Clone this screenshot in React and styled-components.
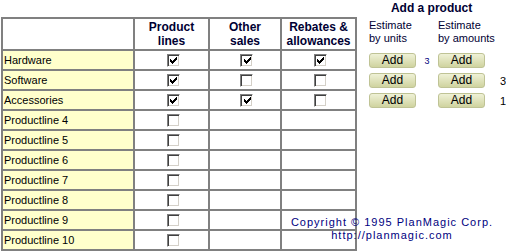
import React from 'react'
import styled, { createGlobalStyle } from 'styled-components'

const GlobalStyle = createGlobalStyle`
    html, body {
        margin: 0;
        padding: 0;
        background: #fff;
    }
    body {
        font-family: "Liberation Sans", Arial, sans-serif;
        color: #000;
    }
`;

const rows = [
    { name: 'Hardware', marks: [true, true, true] },
    { name: 'Software', marks: [true, false, false] },
    { name: 'Accessories', marks: [true, true, false] },
    { name: 'Productline 4', marks: [false, null, null] },
    { name: 'Productline 5', marks: [false, null, null] },
    { name: 'Productline 6', marks: [false, null, null] },
    { name: 'Productline 7', marks: [false, null, null] },
    { name: 'Productline 8', marks: [false, null, null] },
    { name: 'Productline 9', marks: [false, null, null] },
    { name: 'Productline 10', marks: [false, null, null] },
];

const estimates = [
    { units: '3', amounts: '' },
    { units: '', amounts: '3' },
    { units: '', amounts: '1' },
];

const Check = ({ checked }) => (
    <Box>
        {checked && (
            <svg width="7" height="7" viewBox="0 0 7 7" shapeRendering="crispEdges">
                <path d="M6 0h1v3h-1v1h-1v1h-1v1h-1v1h-1v-1h-1v-1h-1v-3h1v1h1v1h1v-1h1v-1h1z" fill="#000" />
            </svg>
        )}
    </Box>
);

const App = () => {
    return (
        <Page>
            <GlobalStyle />
            <Grid>
                <thead>
                    <tr>
                        <Head $w={132} />
                        <Head $w={75}>Product<br />lines</Head>
                        <Head $w={72}>Other<br />sales</Head>
                        <Head $w={75}>Rebates &amp;<br />allowances</Head>
                    </tr>
                </thead>
                <tbody>
                    {rows.map((row) => (
                        <tr key={row.name}>
                            <Label>{row.name}</Label>
                            {row.marks.map((m, i) => (
                                <Cell key={i}>{m !== null && <Check checked={m} />}</Cell>
                            ))}
                        </tr>
                    ))}
                </tbody>
            </Grid>
            <Side>
                <Title>Add a product</Title>
                <Estimates>
                    <Caption>Estimate<br />by units</Caption>
                    <Caption>Estimate<br />by amounts</Caption>
                    {estimates.map((e, i) => (
                        <React.Fragment key={i}>
                            <AddButton>Add</AddButton>
                            <Count $small>{e.units}</Count>
                            <AddButton>Add</AddButton>
                            <Count $pad>{e.amounts}</Count>
                        </React.Fragment>
                    ))}
                </Estimates>
            </Side>
            <Copyright>
                Copyright © 1995 PlanMagic Corp.<br />
                http://planmagic.com
            </Copyright>
        </Page>
    )
}

const Page = styled.div`
    position: relative;
    display: flex;
    align-items: flex-start;
    width: 506px;
    height: 252px;
    overflow: hidden;
`;

const Grid = styled.table`
    margin: 17px 0 0 1px;
    width: 356px;
    table-layout: fixed;
    border-collapse: separate;
    border-spacing: 0;
    border: 1px solid #808080;
    flex-shrink: 0;
`;

const Head = styled.th`
    box-sizing: border-box;
    width: ${(p) => p.$w}px;
    height: 32px;
    padding: 1px 0 1px;
    border: 1px solid #808080;
    font-size: 12px;
    line-height: 14px;
    font-weight: bold;
    color: #000033;
    text-align: center;
    vertical-align: top;
    background: #fff;
`;

const Label = styled.td`
    box-sizing: border-box;
    height: 20px;
    padding: 0 0 0 1px;
    border: 1px solid #808080;
    background: #ffffcc;
    font-size: 11px;
    line-height: 18px;
    white-space: nowrap;
`;

const Cell = styled.td`
    box-sizing: border-box;
    height: 20px;
    padding: 0;
    border: 1px solid #808080;
    text-align: center;
    vertical-align: middle;
    line-height: 0;
`;

const Box = styled.span`
    display: inline-flex;
    align-items: center;
    justify-content: center;
    box-sizing: border-box;
    width: 13px;
    height: 13px;
    margin-left: 3px;
    background: #fff;
    border: 1px solid;
    border-color: #808080 #ffffff #ffffff #808080;
    box-shadow: inset 1px 1px 0 #404040, inset -1px -1px 0 #d4d0c8;
    svg {
        display: block;
        margin: 1px 0 0 1px;
    }
`;

const Side = styled.div`
    flex: 1;
    padding-left: 12px;
`;

const Title = styled.div`
    margin-left: -12px;
    font-size: 12px;
    line-height: 16px;
    font-weight: bold;
    color: #000033;
    text-align: center;
`;

const Estimates = styled.div`
    display: grid;
    grid-template-columns: 47px 22px 47px 1fr;
    grid-template-rows: 32px;
    grid-auto-rows: 20px;
    margin-top: 3px;
    & > :nth-child(1),
    & > :nth-child(2) {
        grid-column: span 2;
    }
`;

const Caption = styled.div`
    font-size: 11px;
    line-height: 13px;
    color: #000033;
`;

const AddButton = styled.button`
    align-self: start;
    margin-top: 2px;
    box-sizing: border-box;
    width: 47px;
    height: 15px;
    padding: 0;
    border: 1px solid #bfc395;
    border-radius: 3px;
    background: linear-gradient(#eff1d6, #cfd39f);
    font-family: "Liberation Sans", Arial, sans-serif;
    font-size: 12px;
    line-height: 13px;
    color: #000;
`;

const Count = styled.div`
    font-size: ${(p) => (p.$small ? '9px' : '11px')};
    line-height: 20px;
    color: ${(p) => (p.$small ? '#000080' : '#000')};
    text-align: ${(p) => (p.$pad ? 'left' : 'center')};
    padding-left: ${(p) => (p.$pad ? '15px' : '0')};
`;

const Copyright = styled.div`
    position: absolute;
    left: 290px;
    top: 216px;
    width: 204px;
    font-size: 11px;
    line-height: 13px;
    letter-spacing: 1px;
    color: #000080;
    text-align: center;
`;

export default App
